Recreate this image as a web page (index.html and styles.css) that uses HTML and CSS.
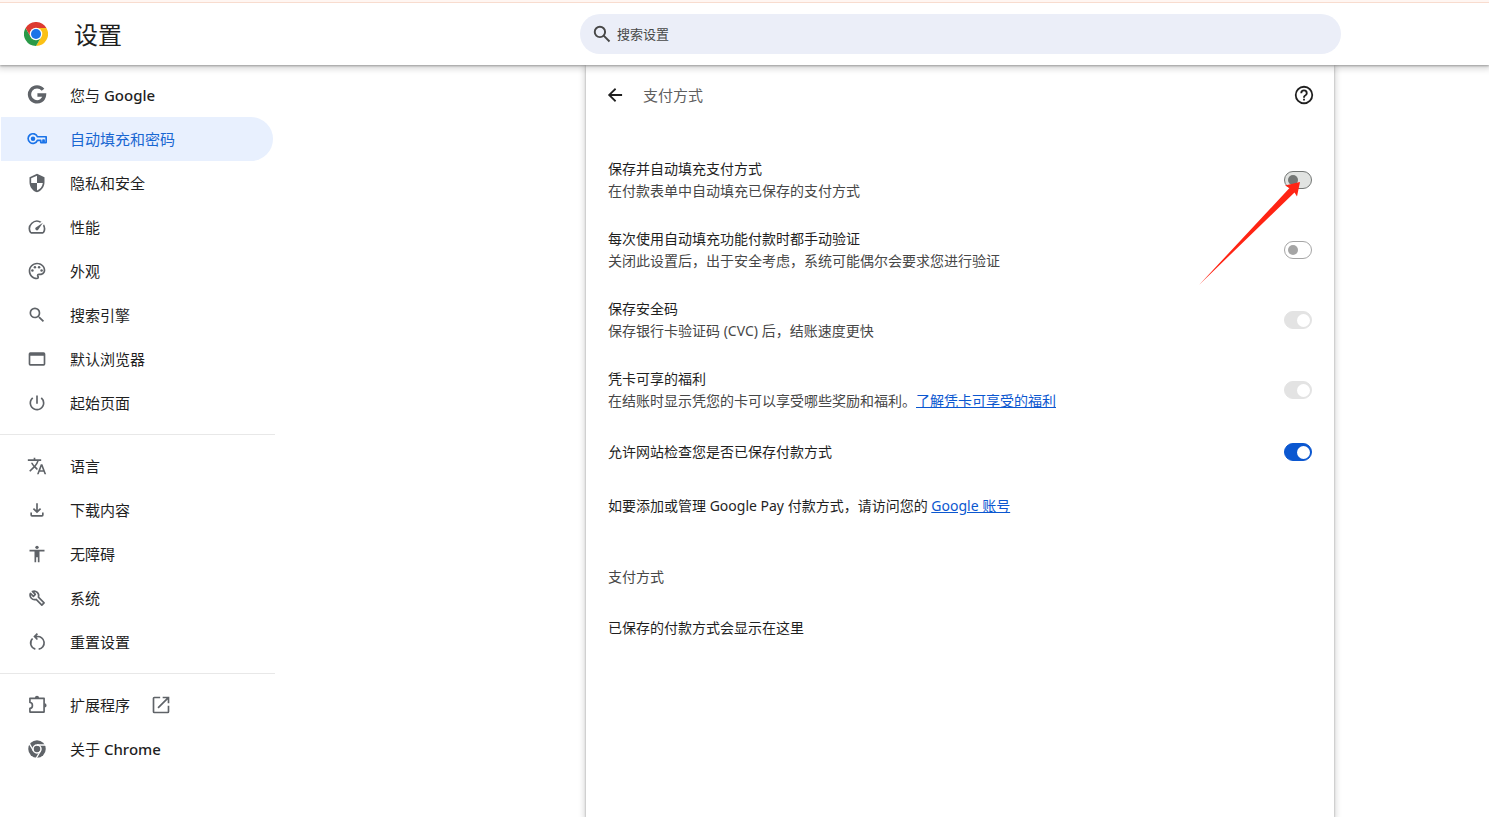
FILE: index.html
```html
<!DOCTYPE html>
<html lang="zh-CN">
<head>
<meta charset="utf-8">
<title>设置 - 支付方式</title>
<link rel="stylesheet" href="styles.css">
</head>
<body>
<header class="toolbar">
  <div class="brand">
    <svg class="logo" viewBox="0 0 48 48" aria-hidden="true">
      <path fill="#fbc116" d="M44.8 12A24 24 0 0 1 24 48L34.4 30 24 12z"/>
      <path fill="#2a9a48" d="M24 48A24 24 0 0 1 3.2 12L13.6 30 34.4 30z"/>
      <path fill="#dd3a30" d="M3.200 12A24 24 0 0 1 44.800 12H24L13.600 30z"/>
      <circle cx="24" cy="24" r="12.500" fill="#fff"/>
      <circle cx="24" cy="24" r="10" fill="#1a73e8"/>
    </svg>
    <h1 class="title">设置</h1>
  </div>
  <label class="search">
    <svg class="search-icon" viewBox="0 0 24 24" aria-hidden="true"><circle cx="9.500" cy="9.500" r="6.200"/><path d="m14 14 7 7"/></svg>
    <input class="search-input" type="search" placeholder="搜索设置" aria-label="搜索设置">
  </label>
</header>
<div class="layout">
  <nav class="sidebar">
    <a class="item" href="#people"><svg class="icon" viewBox="0 0 24 24"><path fill="none" stroke="currentColor" stroke-width="4" d="M19.200 5.800A9 9 0 1 0 21 12H12.500"/></svg><span>您与 <span class="latin">Google</span></span></a>
    <a class="item selected" href="#autofill" aria-current="page"><svg class="icon" viewBox="0 0 24 24"><path fill="none" stroke="currentColor" stroke-width="2" stroke-linejoin="round" d="M12.500 9.300H23v7h-2.500v-3h-1.300v3h-2.700v-2.600h-4A5.800 5.800 0 1 1 12.500 9.300z"/><circle cx="7.200" cy="11.800" r="2.700"/></svg><span>自动填充和密码</span></a>
    <a class="item" href="#privacy"><svg class="icon" viewBox="0 0 24 24"><path d="M12 1 3 5v6c0 5.550 3.840 10.740 9 12 5.160-1.260 9-6.450 9-12V5zm0 10.990h7c-.53 4.120-3.280 7.790-7 8.940V12H5V6.300l7-3.110z"/></svg><span>隐私和安全</span></a>
    <a class="item" href="#performance"><svg class="icon" viewBox="0 0 24 24"><path d="m20.380 8.570-1.230 1.850a8 8 0 0 1-.22 7.580H5.070A8 8 0 0 1 15.580 6.850l1.850-1.230A10 10 0 0 0 3.350 19a2 2 0 0 0 1.720 1h13.850a2 2 0 0 0 1.740-1 10 10 0 0 0-.27-10.440zm-9.790 6.840a2 2 0 0 0 2.830 0l5.660-8.490-8.490 5.660a2 2 0 0 0 0 2.830z"/></svg><span>性能</span></a>
    <a class="item" href="#appearance"><svg class="icon" viewBox="0 0 24 24"><path d="M12 22C6.490 22 2 17.510 2 12S6.490 2 12 2s10 4.040 10 9c0 3.310-2.690 6-6 6h-1.770c-.28 0-.5.22-.5.5 0 .12.050.23.130.33.41.47.64 1.060.64 1.670A2.500 2.500 0 0 1 12 22zm0-18c-4.410 0-8 3.590-8 8s3.590 8 8 8c.28 0 .5-.22.5-.5a.54.54 0 0 0-.14-.35c-.41-.46-.63-1.050-.63-1.650a2.500 2.500 0 0 1 2.500-2.500H16c2.210 0 4-1.790 4-4 0-3.860-3.590-7-8-7z"/><circle cx="6.500" cy="11.500" r="1.500"/><circle cx="9.500" cy="7.500" r="1.500"/><circle cx="14.500" cy="7.500" r="1.500"/><circle cx="17.500" cy="11.500" r="1.500"/></svg><span>外观</span></a>
    <a class="item" href="#search"><svg class="icon" viewBox="0 0 24 24"><path d="M15.500 14h-.79l-.28-.27A6.470 6.470 0 0 0 16 9.500 6.500 6.500 0 1 0 9.500 16c1.610 0 3.090-.59 4.230-1.570l.27.28v.79l5 4.990L20.490 19zm-6 0C7.010 14 5 11.990 5 9.500S7.010 5 9.500 5 14 7.010 14 9.500 11.990 14 9.500 14z"/></svg><span>搜索引擎</span></a>
    <a class="item" href="#browser"><svg class="icon" viewBox="0 0 24 24"><path d="M20 4H4a2 2 0 0 0-2 2v12a2 2 0 0 0 2 2h16a2 2 0 0 0 2-2V6a2 2 0 0 0-2-2zm0 14H4V8h16z"/></svg><span>默认浏览器</span></a>
    <a class="item" href="#startup"><svg class="icon" viewBox="0 0 24 24"><path d="M13 3h-2v10h2zm4.830 2.170-1.420 1.420A6.920 6.920 0 0 1 19 12a7 7 0 1 1-11.420-5.420L6.170 5.170A9 9 0 1 0 21 12a8.940 8.940 0 0 0-3.170-6.830z"/></svg><span>起始页面</span></a>
    <hr class="divider">
    <a class="item" href="#languages"><svg class="icon" viewBox="0 0 24 24"><path d="m12.870 15.070-2.540-2.510.03-.03A17.520 17.520 0 0 0 14.070 6H17V4h-7V2H8v2H1v1.990h11.170C11.500 7.920 10.440 9.750 9 11.350 8.070 10.320 7.300 9.190 6.690 8h-2c.73 1.630 1.730 3.170 2.980 4.560l-5.090 5.020L4 19l5-5 3.110 3.110zM18.500 10h-2L12 22h2l1.120-3h4.750L21 22h2zm-2.620 7 1.620-4.330L19.120 17z"/></svg><span>语言</span></a>
    <a class="item" href="#downloads"><svg class="icon" viewBox="0 0 24 24"><path d="m12 16-5-5 1.400-1.450 2.600 2.600V4h2v8.150l2.600-2.600L17 11zm-6 4a2 2 0 0 1-2-2v-3h2v3h12v-3h2v3a2 2 0 0 1-2 2z"/></svg><span>下载内容</span></a>
    <a class="item" href="#accessibility"><svg class="icon" viewBox="0 0 24 24"><circle cx="12" cy="4" r="2"/><path d="M21 9h-6v13h-2v-6h-2v6H9V9H3V7h18z"/></svg><span>无障碍</span></a>
    <a class="item" href="#system"><svg class="icon" viewBox="0 0 24 24"><path fill="none" stroke="currentColor" stroke-width="2" stroke-linejoin="round" d="M4.100 6.500 7.700 10 10 7.700 6.500 4.100A5.500 5.500 0 0 1 13.700 11l6.800 6.800-2.700 2.700-6.800-6.800A5.500 5.500 0 0 1 4.100 6.500z"/></svg><span>系统</span></a>
    <a class="item" href="#reset"><svg class="icon" viewBox="0 0 24 24"><path fill="none" stroke="currentColor" stroke-width="2" d="M14 20.500A7.500 7.500 0 0 0 12 5.500H9M10 20.500A7.500 7.500 0 0 1 6.700 7.800M12.500 2 9 5.500 12.500 9"/></svg><span>重置设置</span></a>
    <hr class="divider">
    <a class="item" href="#extensions"><svg class="icon" viewBox="0 0 24 24"><path fill="none" stroke="currentColor" stroke-width="2" stroke-linejoin="round" d="M3.500 4H20.500V20.500H3.500V16c1.800 0 3-1.700 3-3.500S5.300 9 3.500 9z"/><path d="M9.500 3.500a2.500 2.500 0 0 1 5 0zM21 10a2.500 2.500 0 0 1 0 5z"/></svg><span>扩展程序</span><svg class="icon external" viewBox="0 0 24 24"><path d="M20 20H4V4h7V2H4a2 2 0 0 0-2 2v16a2 2 0 0 0 2 2h16a2 2 0 0 0 2-2v-7h-2zM14 2v2h4.590L7.760 14.830l1.410 1.410L20 5.410V10h2V2z"/></svg></a>
    <a class="item" href="#about"><svg class="icon" viewBox="0 0 24 24"><circle cx="12" cy="12" r="10.500"/><circle cx="12" cy="12" r="4.800" fill="none" stroke="#fff" stroke-width="1.800"/><path fill="none" stroke="#fff" stroke-width="1.600" d="M12 7.200h11M7.900 14.400 2.800 5.600M16.100 14.400 10.900 23.400"/></svg><span>关于 <span class="latin">Chrome</span></span></a>
  </nav>
  <main class="card">
    <div class="page-head">
      <button class="icon-button" type="button" aria-label="返回"><svg class="icon" viewBox="0 0 24 24"><path d="M20.500 10.900H7.830l5.590-5.490L12 3.500 3.500 12l8.500 8.500 1.410-1.910L7.830 13.100H20.500z"/></svg></button>
      <h2 class="page-title">支付方式</h2>
      <button class="icon-button" type="button" aria-label="帮助"><svg class="help" viewBox="0 0 24 24"><path d="M11 18h2v-2h-2zm1-16a10 10 0 1 0 0 20 10 10 0 0 0 0-20zm0 18c-4.410 0-8-3.590-8-8s3.590-8 8-8 8 3.590 8 8-3.590 8-8 8zm0-14a4 4 0 0 0-4 4h2a2 2 0 1 1 4 0c0 2-3 1.750-3 5h2c0-2.250 3-2.500 3-5a4 4 0 0 0-4-4z"/></svg></button>
    </div>
    <div class="row tall">
      <div class="text"><label for="save">保存并自动填充支付方式</label><p class="sub">在付款表单中自动填充已保存的支付方式</p></div>
      <div class="control">
        <input class="toggle hovered" type="checkbox" role="switch" id="save">
        <svg class="arrow" viewBox="0 0 102 104" aria-hidden="true"><path fill="#ff2414" d="M101 1 86 4.500l4.500 2.500L0 104 95.500 11.500 98 15.500z"/></svg>
      </div>
    </div>
    <div class="row tall">
      <div class="text"><label for="verify">每次使用自动填充功能付款时都手动验证</label><p class="sub">关闭此设置后，出于安全考虑，系统可能偶尔会要求您进行验证</p></div>
      <input class="toggle" type="checkbox" role="switch" id="verify" disabled>
    </div>
    <div class="row tall">
      <div class="text"><label for="cvc">保存安全码</label><p class="sub">保存银行卡验证码 (CVC) 后，结账速度更快</p></div>
      <input class="toggle" type="checkbox" role="switch" id="cvc" checked disabled>
    </div>
    <div class="row tall">
      <div class="text"><label for="benefits">凭卡可享的福利</label><p class="sub">在结账时显示凭您的卡可以享受哪些奖励和福利。<a class="link" href="#benefits">了解凭卡可享受的福利</a></p></div>
      <input class="toggle" type="checkbox" role="switch" id="benefits" checked disabled>
    </div>
    <div class="row">
      <label for="sites">允许网站检查您是否已保存付款方式</label>
      <input class="toggle" type="checkbox" role="switch" id="sites" checked>
    </div>
    <p class="row"><span>如要添加或管理 Google Pay 付款方式，请访问您的 <a class="link" href="#account">Google 账号</a></span></p>
    <h3 class="section-title">支付方式</h3>
    <p class="row">已保存的付款方式会显示在这里</p>
  </main>
</div>
</body>
</html>
```
FILE: styles.css
```css
* { box-sizing: border-box; }
body {
  margin: 0;
  min-height: 100vh;
  display: flex;
  flex-direction: column;
  border-top: 2px solid #fff6f2;
  background: #fff;
  color: #1f1f1f;
  font: 14px/22px "Noto Sans", "Noto Sans CJK SC", sans-serif;
}
h1, h2, h3, p { margin: 0; font-weight: 400; }
svg { display: block; flex: none; fill: currentColor; }

.toolbar {
  position: relative;
  z-index: 1;
  display: grid;
  grid-template-columns: minmax(275px, 580fr) minmax(0, 761px) 148fr;
  align-items: center;
  height: 63px;
  border-top: 1px solid #f8dccf;
  background: #fff;
  box-shadow: 0 1px 2px rgba(0, 0, 0, .3), 0 2px 6px 2px rgba(0, 0, 0, .15);
}
.brand { display: flex; align-items: center; gap: 26px; padding-left: 24px; }
.logo { width: 24px; height: 24px; }
.title { padding-top: 2px; font-size: 24px; line-height: 32px; }
.search {
  display: flex;
  align-items: center;
  gap: 5px;
  height: 40px;
  padding: 0 12px;
  border-radius: 20px;
  background: #ebeef8;
  color: #474747;
}
.search-icon { width: 20px; height: 20px; fill: none; stroke: currentColor; stroke-width: 2.3; }
.search-input {
  flex: 1;
  min-width: 0;
  padding: 0;
  border: 0;
  outline: 0;
  background: none;
  color: inherit;
  font: inherit;
  font-size: 13px;
}
.search-input::placeholder { color: #474747; opacity: 1; }

.layout {
  flex: 1;
  display: grid;
  grid-template-columns: minmax(275px, 586fr) minmax(0, 748px) 155fr;
}
.sidebar { width: 275px; padding: 8px 2px 8px 1px; }
.item {
  display: flex;
  align-items: center;
  gap: 23px;
  height: 44px;
  padding-left: 26px;
  border-radius: 0 22px 22px 0;
  color: #1f1f1f;
  font-size: 15px;
  text-decoration: none;
}
.item .icon { color: #5f6368; }
.item .external { margin-left: -2px; }
.selected { background: #e8f0fe; color: #1967d2; }
.selected .icon { color: #1a73e8; }
.latin { font-weight: 500; }
.icon { width: 20px; height: 20px; }
.divider { margin: 9px -2px 9px -1px; border: 0; border-top: 1px solid #e8e8e8; }

.card {
  background: #fff;
  box-shadow: 0 1px 2px rgba(0, 0, 0, .3), 0 2px 6px 2px rgba(0, 0, 0, .15);
}
.page-head { display: flex; align-items: center; height: 60px; margin-bottom: 20px; padding: 0 19px; }
.icon-button { padding: 0; border: 0; background: none; color: #1f1f1f; }
.help { width: 22px; height: 22px; }
.page-title { flex: 1; margin-left: 18px; color: #5f5f5f; font-size: 15px; }
.row {
  display: flex;
  align-items: center;
  justify-content: space-between;
  gap: 20px;
  min-height: 54px;
  padding: 0 22px;
}
.tall { min-height: 70px; }
.sub { color: #474747; }
.link { color: #0b57d0; }
.section-title { margin: 33px 22px 13px; color: #474747; font-size: 14px; }

.control { position: relative; flex: none; }
.toggle {
  appearance: none;
  display: flex;
  align-items: center;
  flex: none;
  width: 28px;
  height: 18px;
  margin: 0;
  padding-left: 3px;
  border: 1px solid #747775;
  border-radius: 9px;
}
.toggle::before { content: ""; width: 10px; height: 10px; border-radius: 50%; background: #747775; }
.hovered { background: #e1e3e1; }
.toggle:disabled { border-color: #a5a5a5; }
.toggle:disabled::before { background: #a5a5a5; }
.toggle:checked { padding-left: 12px; border-color: #0b57d0; background: #0b57d0; }
.toggle:checked::before { width: 13px; height: 13px; background: #fff; }
.toggle:checked:disabled { border-color: #e3e3e3; background: #e3e3e3; }
.arrow { position: absolute; top: 10px; right: 11px; width: 102px; height: 104px; pointer-events: none; }
```
